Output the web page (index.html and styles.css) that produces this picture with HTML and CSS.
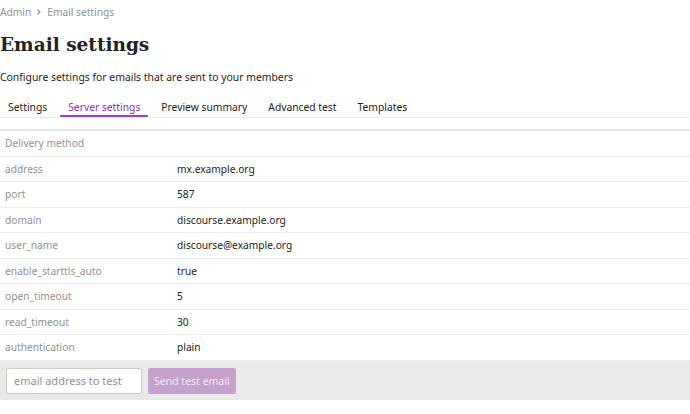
FILE: index.html
```html
<!DOCTYPE html>
<html>
    <head>
        <link rel="stylesheet" href="styles.css">
        <title>Email settings</title>
        <meta charset="utf-8">
    </head>
    <body>
        <div class="crumbs">
            <span>Admin</span>
            <svg class="chev" width="8" height="8" viewBox="0 0 8 8"><path d="M2.5 1.5 L5 4 L2.5 6.5" fill="none" stroke="#919191" stroke-width="1.2"/></svg>
            <span>Email settings</span>
        </div>
        <h1>Email settings</h1>
        <p class="intro">Configure settings for emails that are sent to your members</p>

        <ul class="tabs">
            <li>Settings</li>
            <li class="active">Server settings</li>
            <li>Preview summary</li>
            <li>Advanced test</li>
            <li>Templates</li>
        </ul>

        <table class="settings">
            <tr><td class="key">Delivery method</td><td></td></tr>
            <tr><td class="key">address</td><td>mx.example.org</td></tr>
            <tr><td class="key">port</td><td>587</td></tr>
            <tr><td class="key">domain</td><td>discourse.example.org</td></tr>
            <tr><td class="key">user_name</td><td>discourse@example.org</td></tr>
            <tr><td class="key">enable_starttls_auto</td><td>true</td></tr>
            <tr><td class="key">open_timeout</td><td>5</td></tr>
            <tr><td class="key">read_timeout</td><td>30</td></tr>
            <tr><td class="key">authentication</td><td>plain</td></tr>
        </table>

        <div class="test-bar">
            <input type="text" placeholder="email address to test">
            <button disabled>Send test email</button>
        </div>
    </body>
</html>
```

FILE: styles.css
```css
body {
    margin: 0;
    font-family: "Noto Sans", "Open Sans", sans-serif;
    color: #222;
    background: #fff;
}

.crumbs {
    display: flex;
    align-items: center;
    gap: 4px;
    height: 24px;
    font-size: 10.2px;
    color: #919191;
}

h1 {
    margin: 9px 0 0;
    font-family: "DejaVu Serif", serif;
    font-size: 18.5px;
    line-height: 24px;
    font-weight: bold;
    color: #222;
}

.intro {
    margin: 12px 0 0;
    font-size: 10.4px;
    line-height: 16px;
}

.tabs {
    display: flex;
    list-style: none;
    margin: 11px 0 0;
    padding: 0;
    border-bottom: 1px solid #ececec;
}

.tabs li {
    padding: 3px 8px 0;
    margin-right: 5px;
    font-size: 10.3px;
    line-height: 16px;
    border-bottom: 2px solid transparent;
}

.tabs li.active {
    color: #8e2fb0;
    border-bottom-color: #9c46bd;
}

.settings {
    width: 100%;
    margin-top: 11px;
    border-collapse: collapse;
    border-top: 2px solid #e6e6e6;
    font-size: 10.2px;
}

.settings td {
    height: 24.5px;
    padding: 0 5px;
    border-bottom: 1px solid #ececec;
}

.settings td.key {
    width: 162px;
    color: #919191;
}

.test-bar {
    display: flex;
    gap: 6px;
    padding: 7px 6px 6px;
    background: #e9e9e9;
}

.test-bar input {
    width: 136px;
    height: 26px;
    box-sizing: border-box;
    padding: 0 7px;
    border: 1px solid #ccc;
    border-radius: 2px;
    font-family: inherit;
    font-size: 11px;
}

.test-bar input::placeholder {
    color: #919191;
}

.test-bar button {
    height: 26px;
    padding: 0 6px;
    border: none;
    border-radius: 2px;
    background: #c5a0cc;
    color: #f2e8f4;
    font-family: inherit;
    font-size: 10.5px;
}
```
